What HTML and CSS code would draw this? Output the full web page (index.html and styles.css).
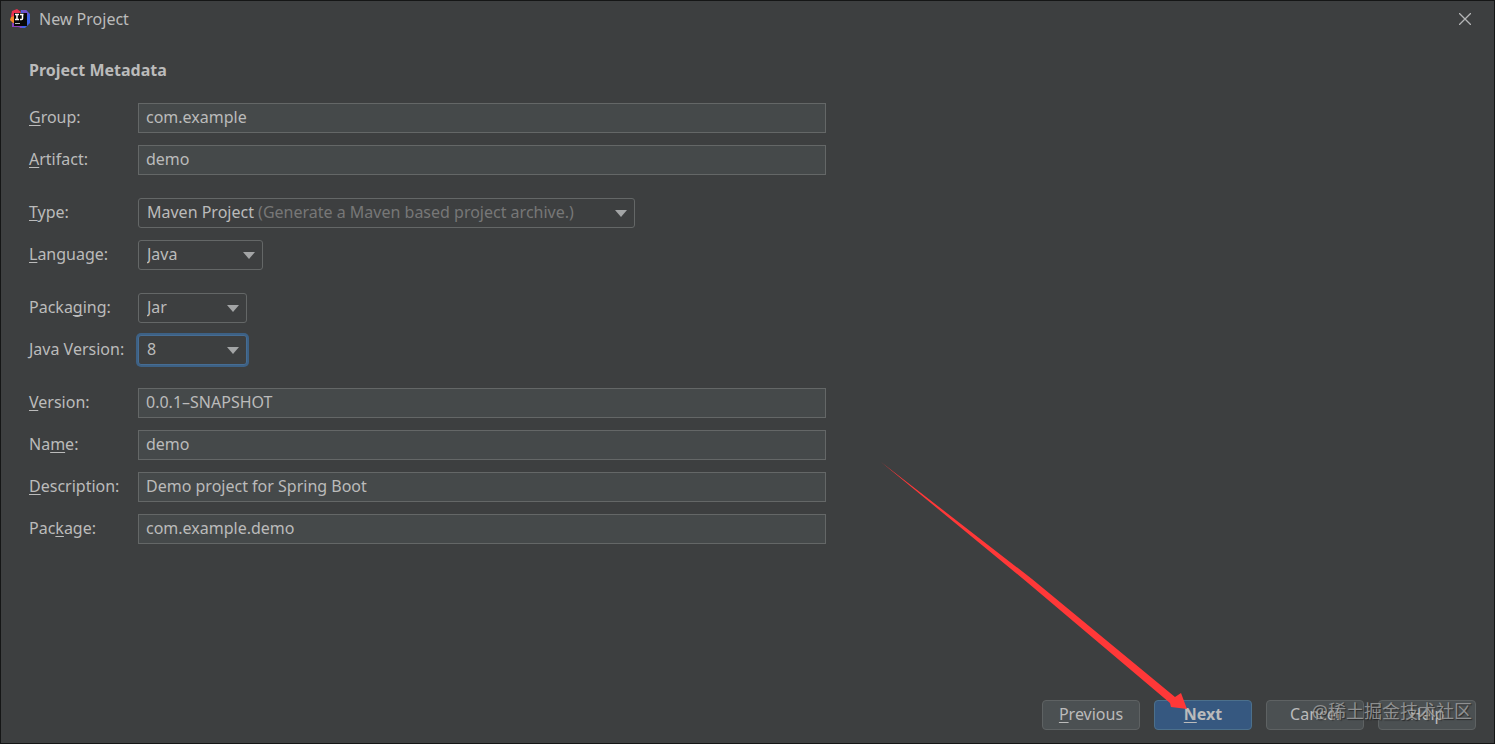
FILE: index.html
```html
<!DOCTYPE html>
<html lang="en">
<head>
<meta charset="utf-8">
<title>New Project</title>
<link rel="stylesheet" href="styles.css">
</head>
<body>
<div class="dialog">
  <header class="titlebar">
    <svg class="logo" viewBox="0 0 22 22" aria-hidden="true">
      <path d="M3 3 8 1 12 4 10 12 4 12 2 8Z" fill="#e8314f"/>
      <path d="M2 9 5 8 6 16 4 15 1 12Z" fill="#f58529"/>
      <path d="M12 2 17 2 21 6 21 15 16 20 11 20Z" fill="#3d63e8"/>
      <path d="M12 2 17 2 20 6 17 9Z" fill="#7250c8"/>
      <path d="M3 15 12 16 13 20 9 19 3 19Z" fill="#8d3fc0"/>
      <rect x="5" y="5" width="13" height="13" fill="#080808"/>
      <path d="M6 6.500H10M8 6.500V11M6 11.500H10M11 6.500H14.500M13.500 6.500V10.500Q13.500 11.500 12.500 11.500H11" fill="none" stroke="#fff" stroke-width="1.500"/>
      <path d="M6 15.500H11" stroke="#bbb"/>
    </svg>
    <h1 class="title">New Project</h1>
    <button class="close" type="button" aria-label="Close">
      <svg viewBox="0 0 12 12" width="12" height="12" aria-hidden="true"><path d="M0 0 12 12M12 0 0 12" stroke="#b4b5b6" stroke-width="1.300"/></svg>
    </button>
  </header>

  <form class="form" id="metadata">
    <h2 class="heading">Project Metadata</h2>
    <div class="group">
      <label for="group"><u>G</u>roup:</label>
      <input class="field" id="group" type="text" value="com.example">
      <label for="artifact"><u>A</u>rtifact:</label>
      <input class="field" id="artifact" type="text" value="demo">
    </div>
    <div class="group">
      <label for="type"><u>T</u>ype:</label>
      <div class="combo combo-wide">
        <select id="type" aria-describedby="type-hint"><option>Maven Project</option><option>Gradle Project</option></select>
        <span class="hint"><span class="hint-space" aria-hidden="true">Maven Project </span><span id="type-hint">(Generate a Maven based project archive.)</span></span>
        <svg class="chevron" viewBox="0 0 12 7" aria-hidden="true"><path d="M0 0H12L6 7Z"/></svg>
      </div>
      <label for="language"><u>L</u>anguage:</label>
      <div class="combo combo-medium">
        <select id="language"><option>Java</option><option>Kotlin</option><option>Groovy</option></select>
        <svg class="chevron" viewBox="0 0 12 7" aria-hidden="true"><path d="M0 0H12L6 7Z"/></svg>
      </div>
    </div>
    <div class="group">
      <label for="packaging">Packa<u>g</u>ing:</label>
      <div class="combo combo-small">
        <select id="packaging"><option>Jar</option><option>War</option></select>
        <svg class="chevron" viewBox="0 0 12 7" aria-hidden="true"><path d="M0 0H12L6 7Z"/></svg>
      </div>
      <label for="java">Java Version:</label>
      <div class="combo combo-small">
        <select id="java" class="focused"><option>8</option><option>11</option></select>
        <svg class="chevron" viewBox="0 0 12 7" aria-hidden="true"><path d="M0 0H12L6 7Z"/></svg>
      </div>
    </div>
    <div class="group">
      <label for="version"><u>V</u>ersion:</label>
      <input class="field" id="version" type="text" value="0.0.1–SNAPSHOT">
      <label for="name">Na<u>m</u>e:</label>
      <input class="field" id="name" type="text" value="demo">
      <label for="description"><u>D</u>escription:</label>
      <input class="field" id="description" type="text" value="Demo project for Spring Boot">
      <label for="package">Pac<u>k</u>age:</label>
      <input class="field" id="package" type="text" value="com.example.demo">
    </div>
  </form>

  <footer class="actions">
    <button class="button" type="button"><u>P</u>revious</button>
    <button class="button primary" type="submit" form="metadata"><u>N</u>ext</button>
    <button class="button" type="button">Cancel</button>
    <button class="button" type="button">Help</button>
    <svg class="arrow" viewBox="0 0 306 247" aria-hidden="true"><path d="M0 0 151 117 294 235 300 231 306 247 290 245 289 241 147 121Z"/></svg>
    <span class="watermark">@稀土掘金技术社区</span>
  </footer>
</div>
</body>
</html>
```
FILE: styles.css
```css
* { box-sizing: border-box; }

body {
  margin: 0;
  background: #3d3f40;
  color: #bbbbbb;
  font: 16px/20px "Noto Sans", "Noto Sans CJK SC", sans-serif;
}

.dialog {
  display: flex;
  flex-direction: column;
  min-height: 100vh;
  border: 1px solid #151616;
}

.titlebar {
  display: flex;
  align-items: center;
  gap: 8px;
  height: 36px;
  padding: 0 23px 0 8px;
}

.logo { width: 22px; height: 22px; }

.title { flex: 1; margin: 0; font-size: 16px; font-weight: 400; }

.close {
  display: flex;
  padding: 0;
  border: 0;
  background: none;
}

.form {
  display: flex;
  flex-direction: column;
  gap: 23px;
  padding: 23px 28px;
}

.heading { margin: 0; font-size: 16px; line-height: 20px; font-weight: 700; }

.group {
  display: grid;
  grid-template-columns: 109px minmax(0, 688px);
  row-gap: 12px;
  align-items: center;
}

label { padding-bottom: 2px; }

u { text-underline-offset: 2px; text-decoration-thickness: 1px; text-decoration-skip-ink: none; }

.field {
  width: 100%;
  height: 30px;
  padding: 0 7px 2px;
  border: 1px solid #646767;
  background: #45494a;
  color: inherit;
  font: inherit;
}

.combo {
  display: grid;
  grid-template-columns: 1fr auto;
  align-items: center;
  max-width: 100%;
}

.combo-wide { width: 497px; }
.combo-medium { width: 125px; }
.combo-small { width: 109px; }

.combo select {
  grid-area: 1 / 1 / 2 / 3;
  width: 100%;
  height: 30px;
  padding: 0 8px 2px;
  appearance: none;
  border: 1px solid #646767;
  border-radius: 3px;
  background: #3d3f40;
  color: inherit;
  font: inherit;
}

.combo select.focused { border-color: #466d94; box-shadow: 0 0 0 2px #3d6185; outline: none; }

.hint {
  grid-area: 1 / 1;
  padding: 0 0 2px 9px;
  color: #777777;
  white-space: pre;
  pointer-events: none;
}

.hint-space { visibility: hidden; }

.chevron {
  grid-area: 1 / 2;
  width: 12px;
  height: 7px;
  margin-right: 8px;
  fill: #a3a5a6;
  pointer-events: none;
}

.actions {
  position: relative;
  display: flex;
  justify-content: flex-end;
  gap: 14px;
  margin-top: auto;
  padding: 0 18px 13px;
}

.button {
  width: 98px;
  height: 30px;
  padding: 0 0 2px;
  border: 1px solid #5e6263;
  border-radius: 4px;
  background: #4b5052;
  color: inherit;
  font: inherit;
}

.primary { border-color: #4c708c; background: #365880; font-weight: 700; }

.arrow {
  position: absolute;
  right: 307px;
  bottom: 34px;
  width: 306px;
  height: 247px;
  fill: #ff3838;
  pointer-events: none;
}

.watermark {
  position: absolute;
  right: 22px;
  bottom: 22px;
  color: #a0a1a1;
  font-size: 18px;
  opacity: 0.8;
  text-shadow: 1px 1px 1px #222222;
  pointer-events: none;
}
```
